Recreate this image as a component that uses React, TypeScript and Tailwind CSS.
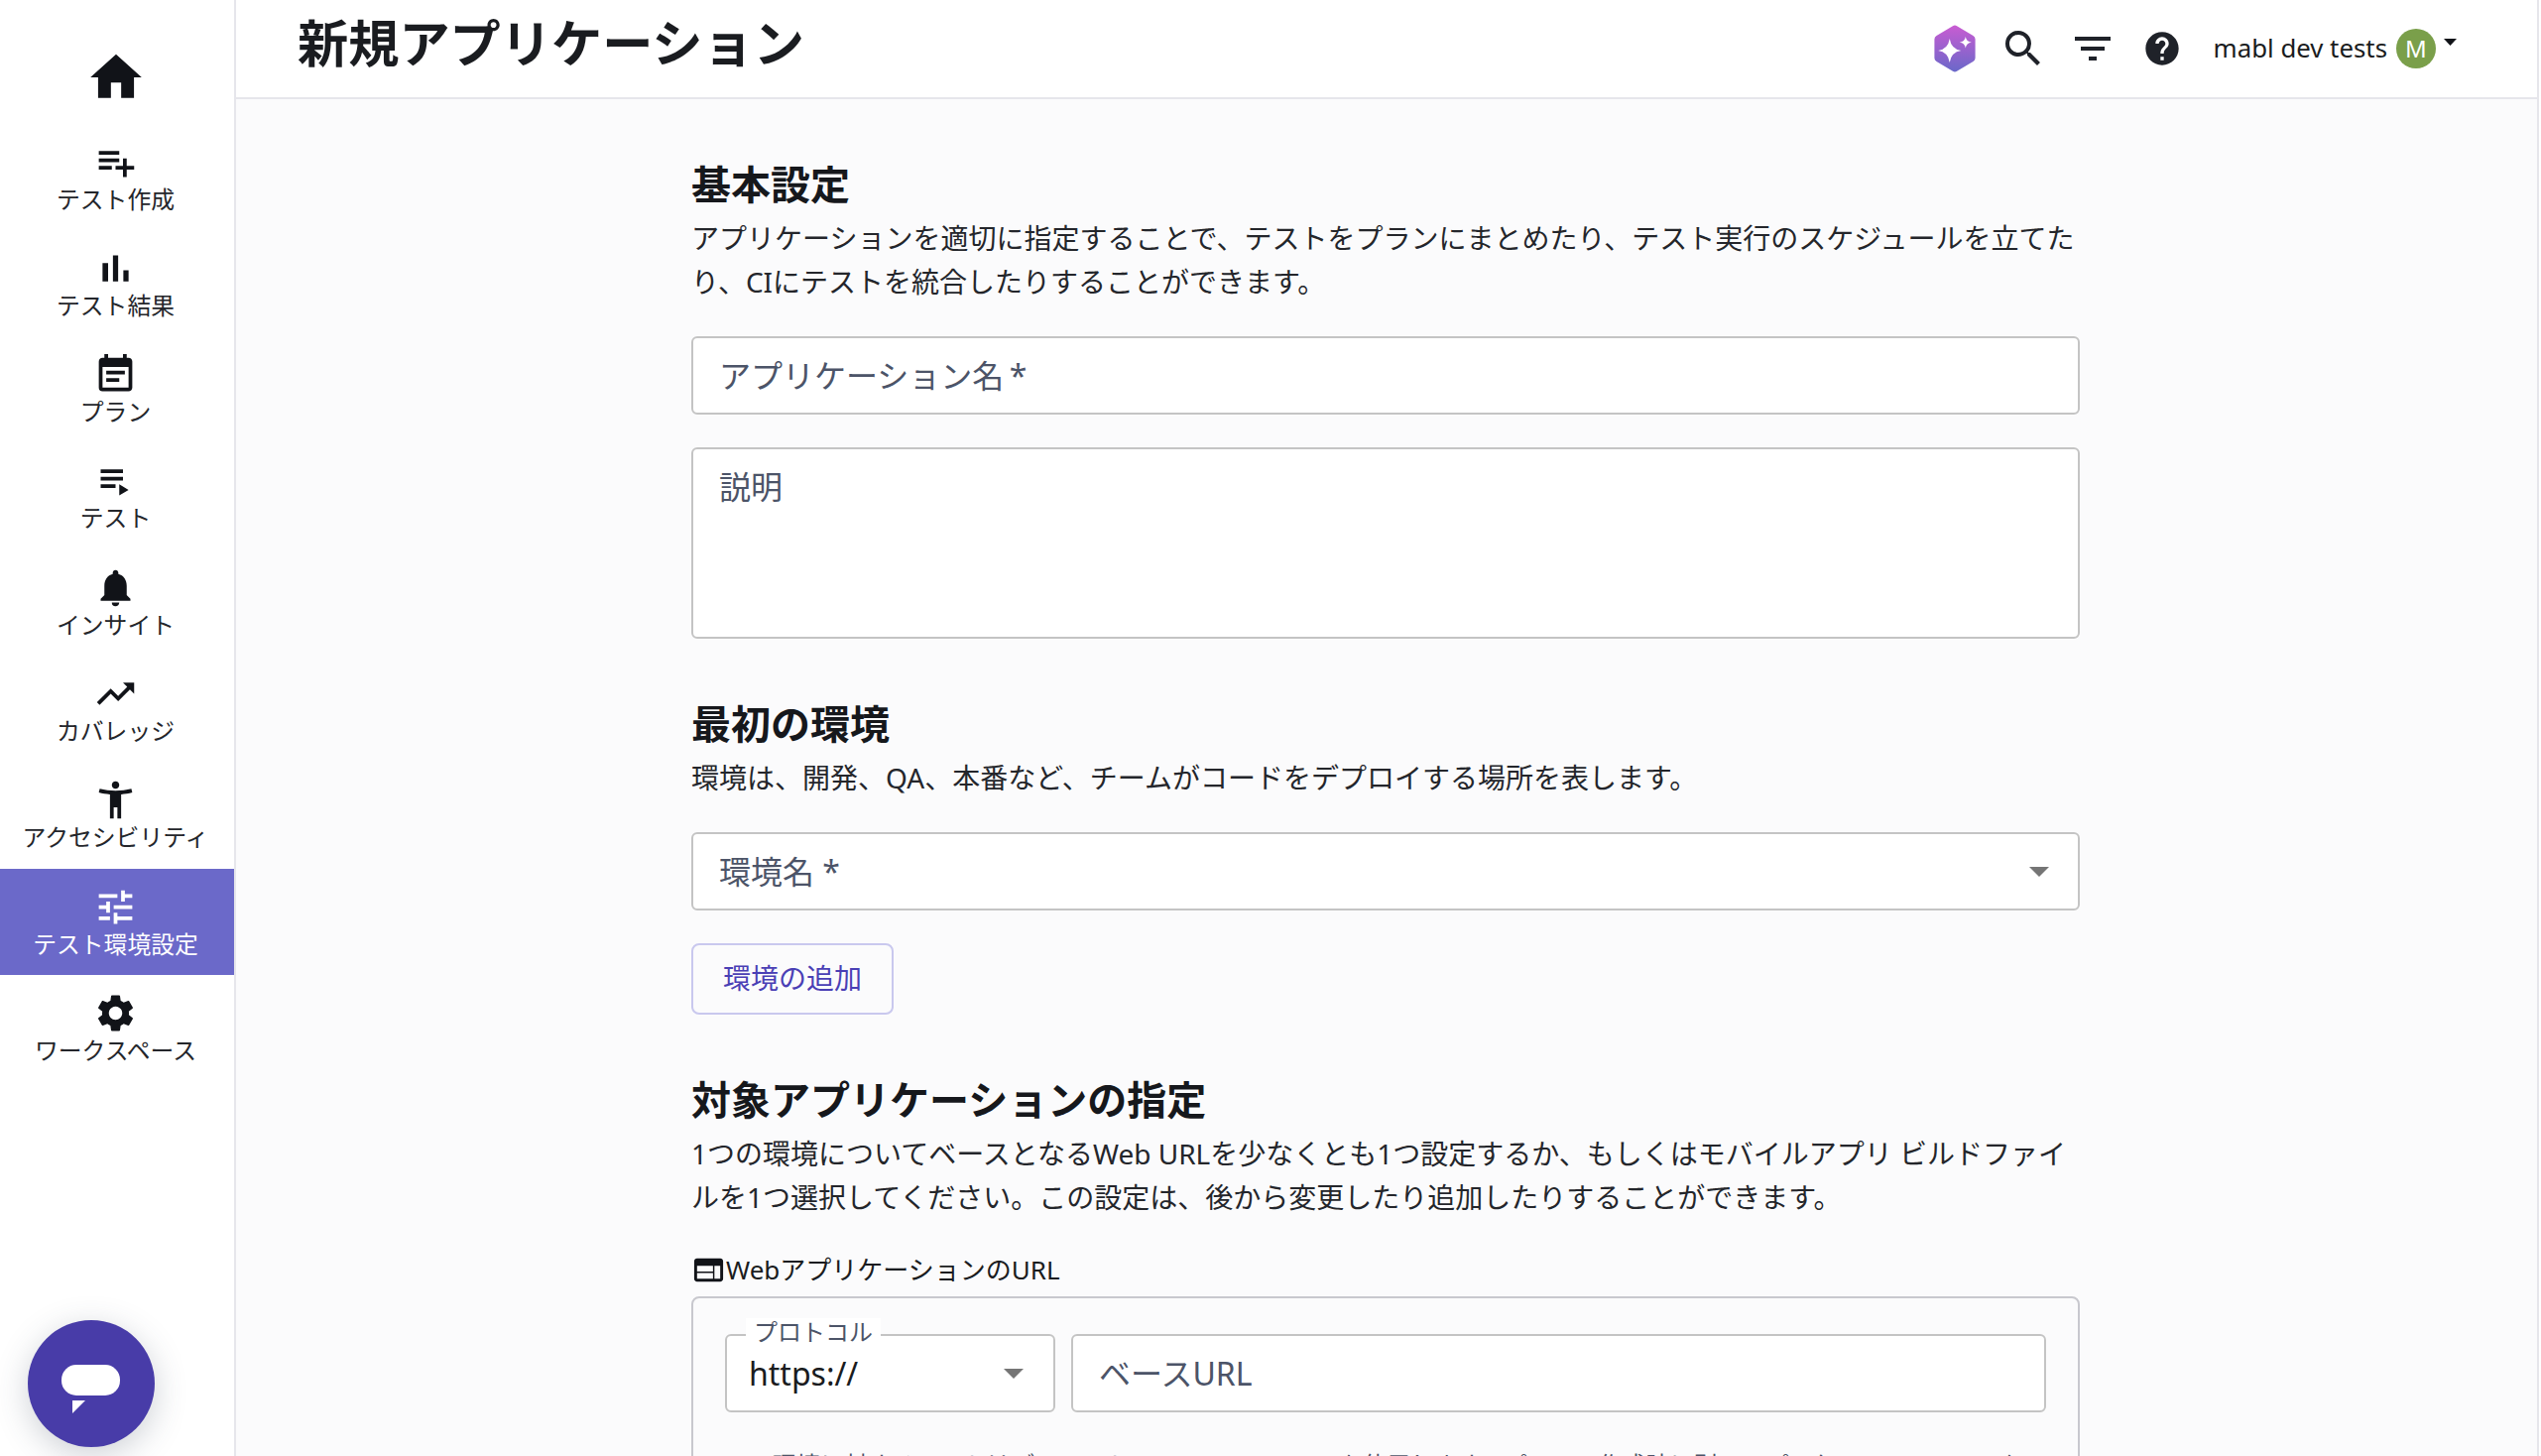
import {
  MdAccessibilityNew,
  MdEventNote,
  MdFilterList,
  MdHelp,
  MdHome,
  MdNotifications,
  MdPlaylistAdd,
  MdSearch,
  MdSettings,
  MdTrendingUp,
  MdTune,
  MdWeb,
} from "react-icons/md";

const BarChartIcon = ({ className }: { className?: string }) => {
  return (
    <svg viewBox="0 0 24 24" fill="currentColor" className={className}>
      <path d="M5 9.2h3V19H5zM10.6 5h2.8v14h-2.8zm5.6 8H19v6h-2.8z" />
    </svg>
  );
};

const PlaylistPlayIcon = ({ className }: { className?: string }) => {
  return (
    <svg viewBox="0 0 24 24" fill="currentColor" className={className}>
      <path d="M4 10h12v2H4zm0-4h12v2H4zm0 8h8v2H4zm10 0v6l5-3z" />
    </svg>
  );
};

const navItems = [
  { label: "テスト作成", icon: MdPlaylistAdd },
  { label: "テスト結果", icon: BarChartIcon },
  { label: "プラン", icon: MdEventNote },
  { label: "テスト", icon: PlaylistPlayIcon },
  { label: "インサイト", icon: MdNotifications },
  { label: "カバレッジ", icon: MdTrendingUp },
  { label: "アクセシビリティ", icon: MdAccessibilityNew },
  { label: "テスト環境設定", icon: MdTune, active: true },
  { label: "ワークスペース", icon: MdSettings },
];

const Sidebar = () => {
  return (
    <aside className="w-[238px] h-full shrink-0 bg-white border-r-2 border-[#e6e6eb] flex flex-col">
      <div className="h-[125px] pt-[47px] pr-[3px] flex justify-center">
        <MdHome className="w-[62px] h-[62px] text-[#111318]" />
      </div>
      {navItems.map((item) => {
        const Icon = item.icon;
        return (
          <div
            key={item.label}
            className={
              item.active
                ? "h-[107.3px] pt-[15.5px] pr-[3px] flex flex-col items-center bg-[#6b69c9] text-white"
                : "h-[107.3px] pt-[15.5px] pr-[3px] flex flex-col items-center text-[#24262b]"
            }
          >
            <Icon
              className={
                item.active
                  ? "w-[45px] h-[45px] text-white"
                  : "w-[45px] h-[45px] text-[#111318]"
              }
            />
            <span className="text-[23.8px] leading-[30px] whitespace-nowrap">
              {item.label}
            </span>
          </div>
        );
      })}
    </aside>
  );
};

const GemIcon = () => {
  return (
    <svg width="42" height="48" viewBox="0 0 40 48" preserveAspectRatio="none">
      <defs>
        <linearGradient id="gem" x1="0" y1="0" x2="0" y2="1">
          <stop offset="0" stopColor="#c95cd2" />
          <stop offset="1" stopColor="#6a68c9" />
        </linearGradient>
      </defs>
      <path
        d="M18 1.2a4 4 0 0 1 4 0L37.6 11a4 4 0 0 1 2 3.4v19.2a4 4 0 0 1-2 3.4L22 46.8a4 4 0 0 1-4 0L2.4 37a4 4 0 0 1-2-3.4V14.4a4 4 0 0 1 2-3.4z"
        fill="url(#gem)"
      />
      <path
        d="M15 14Q16.5 24.5 26 26Q16.5 27.5 15 38Q13.5 27.5 4 26Q13.5 24.5 15 14z"
        fill="#fff"
      />
      <path
        d="M30.3 12Q31 17 36 17.7Q31 18.4 30.3 23.4Q29.6 18.4 24.6 17.7Q29.6 17 30.3 12z"
        fill="#fff"
      />
    </svg>
  );
};

const Header = () => {
  return (
    <header className="h-[100px] shrink-0 bg-white border-b-2 border-[#e6e6eb] flex items-center pl-[62px] pr-[81px]">
      <h1 className="text-[51.2px] leading-[60px] font-bold text-[#1a1c20] mb-[12px]">
        新規アプリケーション
      </h1>
      <div className="ml-auto flex items-center text-[#1f2229]">
        <GemIcon />
        <MdSearch className="w-[48px] h-[48px] ml-[24px]" />
        <MdFilterList className="w-[48px] h-[48px] ml-[22px]" />
        <MdHelp className="w-[40px] h-[40px] ml-[26px]" />
        <span className="ml-[32px] mb-[1px] text-[25.8px] text-[#1a1c20] whitespace-nowrap">
          mabl dev tests
        </span>
        <div className="ml-[9px] w-[40px] h-[40px] rounded-full bg-[#7a9f4a] text-white text-[24px] flex items-center justify-center">
          M
        </div>
        <svg width="13" height="7" viewBox="0 0 13 7" className="ml-[8px] mb-[13px]">
          <polygon points="0,0 13,0 6.5,7" fill="#111318" />
        </svg>
      </div>
    </header>
  );
};

const Arrow = ({ className }: { className?: string }) => {
  return (
    <svg width="20" height="10" viewBox="0 0 20 10" className={className}>
      <polygon points="0,0 20,0 10,10" fill="#757575" />
    </svg>
  );
};

const fieldClass =
  "block w-full bg-white border-2 border-[#c4c4c4] rounded-[6px] text-[32px] outline-none px-[26px] placeholder:text-[#4c5468] text-[#4c5468]";

const headingClass = "text-[40px] leading-[60px] font-bold text-[#16181c] mt-[56px]";
const bodyClass = "mt-[2px] text-[28px] leading-[44px] text-[#24262b]";

const Content = () => {
  return (
    <main className="flex-1 overflow-hidden bg-[#fbfbfc] pl-[459px]">
      <div className="w-[1400px]">
        <h2 className={headingClass}>基本設定</h2>
        <p className={bodyClass}>
          アプリケーションを適切に指定することで、テストをプランにまとめたり、テスト実行のスケジュールを立てたり、CIにテストを統合したりすることができます。
        </p>
        <input
          className={`${fieldClass} h-[79px] mt-[33px]`}
          placeholder={"アプリケーション名\u2009*"}
        />
        <textarea
          className={`${fieldClass} h-[193px] mt-[33px] py-[14px] resize-none`}
          placeholder="説明"
        />

        <h2 className={headingClass}>最初の環境</h2>
        <p className={bodyClass}>
          環境は、開発、QA、本番など、チームがコードをデプロイする場所を表します。
        </p>
        <div className={`${fieldClass} h-[79px] mt-[33px] flex items-center justify-between pr-[29px]`}>
          <span>環境名 *</span>
          <Arrow />
        </div>
        <button className="block mt-[33px] w-[204px] h-[72px] pb-[2px] border-2 border-[#c9c8ee] rounded-[8px] text-[28px] text-[#4a3fb5]">
          環境の追加
        </button>

        <h2 className={headingClass}>対象アプリケーションの指定</h2>
        <p className={bodyClass}>
          1つの環境についてベースとなるWeb URLを少なくとも1つ設定するか、もしくはモバイルアプリ ビルドファイルを1つ選択してください。この設定は、後から変更したり追加したりすることができます。
        </p>
        <div className="mt-[31px] h-[40px] flex items-center text-[26px] text-[#1a1c20]">
          <MdWeb className="w-[35px] h-[35px] text-[#111318]" />
          <span>WebアプリケーションのURL</span>
        </div>
        <div className="mt-[7px] border-2 border-[#c8c8ce] rounded-[8px] px-[32px] pt-[36px]">
          <div className="flex gap-[16px]">
            <div className="relative w-[333px] h-[79px] bg-white border-2 border-[#c4c4c4] rounded-[6px] flex items-center justify-between pl-[22px] pr-[30px] text-[32px] text-[#1a1c20]">
              <span className="absolute left-[19px] -top-[18px] bg-white px-[8px] text-[24px] leading-[28px] text-[#4c5468]">
                プロトコル
              </span>
              <span>https://</span>
              <Arrow />
            </div>
            <input
              className={`${fieldClass} flex-1 h-[79px]`}
              placeholder="ベースURL"
            />
          </div>
          <p className="mt-[35px] text-[24px] leading-[36px] text-[#4c5468]">
            この環境に対するテストはデフォルトで、このベースURLを使用します。プランの作成時に別のアプリケーションのURLを指定することもできます。
          </p>
        </div>
      </div>
    </main>
  );
};

const App = () => {
  return (
    <div className="relative h-screen overflow-hidden bg-white pr-[2px] flex font-['Noto_Sans','Noto_Sans_CJK_JP',sans-serif]">
      <Sidebar />
      <div className="flex-1 min-w-0 h-full flex flex-col border-r-2 border-[#e6e6eb]">
        <Header />
        <Content />
      </div>
      <button className="absolute left-[28px] top-[1331px] w-[128px] h-[128px] rounded-full bg-[#483ca8] shadow-[0_8px_32px_rgba(60,70,90,0.25)] flex items-center justify-center">
        <svg width="128" height="128" viewBox="0 0 128 128">
          <rect x="34" y="45" width="59" height="31" rx="15" fill="#fff" />
          <polygon points="45,81 58,81 45,94" fill="#fff" />
        </svg>
      </button>
    </div>
  );
};

export default App;
